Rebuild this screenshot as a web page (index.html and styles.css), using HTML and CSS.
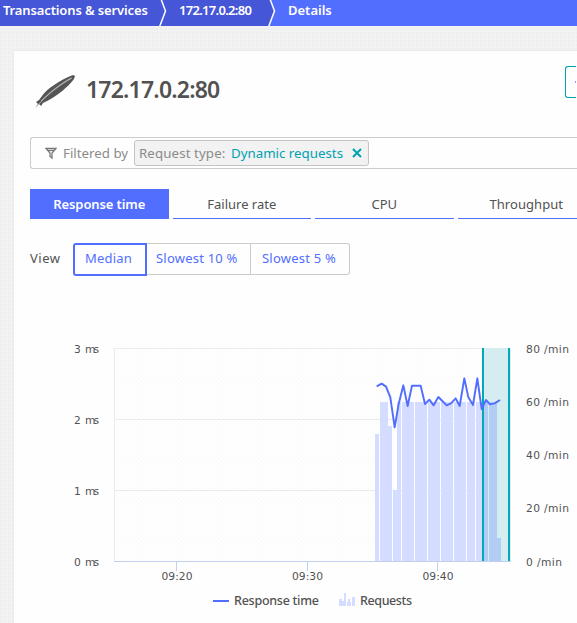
FILE: index.html
```html
<!DOCTYPE html>
<html lang="en">
<head>
<meta charset="utf-8">
<title>172.17.0.2:80</title>
<link rel="stylesheet" href="styles.css">
</head>
<body>
<nav class="crumbs">
  <a class="crumb crumb-first">Transactions &amp; services</a>
  <svg class="sep" viewBox="0 0 10 26"><path class="sep-fill" d="M0 0H3L8 11L2 26H0Z"/><path class="sep-line" d="M3 -1L7.500 11L1.500 27"/></svg>
  <a class="crumb crumb-second">172.17.0.2:80</a>
  <svg class="sep sep-last" viewBox="0 0 10 26"><path class="sep-fill" d="M0 0H3L8 11L2 26H0Z"/><path class="sep-line" d="M3 -1L7.500 11L1.500 27"/></svg>
  <a class="crumb crumb-third">Details</a>
</nav>
<main class="panel">
  <header class="head">
    <svg class="feather" viewBox="0 0 42 36">
      <path class="plume" d="M1 34L4 30L2 28L5 26L8 22C13 15 24 7 39 1L41 2L40 5C34 13 24 21 15 26L9 29L7 32L5 30Z"/>
      <path class="quill" d="M4 31C13 21 24 12 38 4M7 27C15 19 26 10 37 4"/>
    </svg>
    <h1>172.17.0.2:80</h1>
    <button class="more" aria-label="More"><svg class="dash" viewBox="0 0 1 2"><path d="M0 0H1V2H0Z"/></svg></button>
  </header>
  <section class="filter">
    <svg class="funnel" viewBox="0 0 12 12"><path d="M1 1.500H11L7 6V11L5 9.500V6Z"/><path d="M3 3.500H9"/></svg>
    <span class="by">Filtered by</span>
    <span class="chip"><span class="key">Request type:</span><span class="value">Dynamic requests</span><svg class="close" viewBox="0 0 10 10"><path d="M1 1L9 9M9 1L1 9"/></svg></span>
  </section>
  <div class="tabs">
    <a class="tab active">Response time</a>
    <a class="tab">Failure rate</a>
    <a class="tab">CPU</a>
    <a class="tab last">Throughput</a>
  </div>
  <div class="view">
    <span class="label">View</span>
    <a class="opt chosen">Median</a><a class="opt ten">Slowest 10 %</a><a class="opt five">Slowest 5 %</a>
  </div>
  <svg class="chart" viewBox="30 335 547 288">
    <defs>
      <pattern id="dots" width="5" height="5" patternUnits="userSpaceOnUse"><path d="M1 1h1v1H1zM3 3h1v1H3z" fill="#f8f8f8"/></pattern>
    </defs>
    <rect x="114" y="348" width="396" height="213" fill="url(#dots)"/>
    <path class="grid" d="M114.500 561V348M114 348.500H511M114 419.500H511M114 490.500H511M510.500 348V561"/>
    <path class="bars" d="M375 434h4v127h-4zM380 402h8v24h4v135h-12zM393 490h4v-88h4v159h-8zM402 402h12v159h-12zM415 402h12v159h-12zM428 402h12v159h-12zM441 402h12v159h-12zM454 402h12v159h-12zM467 402h8v159h-8zM476 402h6v159h-6z"/>
    <rect class="selection" x="483" y="348" width="26" height="213"/>
    <path class="bars-selected" d="M484 402h4v159h-4zM489 402h8v136h4v23h-12z"/>
    <path class="axis" d="M114 561.500H511M176.500 562V571M307.500 562V571M437.500 562V571"/>
    <path class="handles" d="M483 348V561M509 348V561"/>
    <polyline class="line" transform="translate(360 335) scale(.333333)" points="50,154 65,146 78,155 91,187 104,277 116,207 130,151 143,213 156,152 169,152 182,152 195,207 208,194 221,211 235,186 247,198 260,211 273,205 287,190 299,213 313,130 325,187 339,210 352,130 365,222 378,195 390,208 404,205 420,195"/>
    <g class="ticks">
      <text x="74" y="353">3</text><text x="85" y="353" textLength="14">ms</text>
      <text x="74" y="424">2</text><text x="85" y="424" textLength="14">ms</text>
      <text x="74" y="495">1</text><text x="85" y="495" textLength="14">ms</text>
      <text x="74" y="566">0</text><text x="85" y="566" textLength="14">ms</text>
      <text x="526" y="353" textLength="43">80 /min</text>
      <text x="526" y="406" textLength="43">60 /min</text>
      <text x="526" y="459" textLength="43">40 /min</text>
      <text x="526" y="512" textLength="43">20 /min</text>
      <text x="526" y="566" textLength="36">0 /min</text>
      <text x="161.500" y="580" textLength="31">09:20</text>
      <text x="292" y="580" textLength="31">09:30</text>
      <text x="422.500" y="580" textLength="31">09:40</text>
    </g>
    <path class="key-line" d="M213 601H229"/>
    <path class="key-bars" d="M339 599h3v7h-3zM344 593h2v13h-2zM342 601h2v5h-2zM347 602h4v4h-4zM348 599h2v3h-2zM352 597h3v9h-3z"/>
    <g class="legend">
      <text x="234" y="605" textLength="85">Response time</text>
      <text x="360" y="605" textLength="52">Requests</text>
    </g>
  </svg>
</main>
</body>
</html>
```

FILE: styles.css
```css
* { box-sizing: border-box; }
body {
  margin: 0;
  height: 623px;
  overflow: hidden;
  color: #525252;
  font: 13px/20px "Noto Sans", sans-serif;
  background: #f2f2f2 radial-gradient(circle at 1px 1px, #eeeeee 0.7px, transparent 0.8px) 0 0 / 4px 4px;
}
.crumbs {
  display: flex;
  height: 26px;
  background: #526eff;
  color: #fff;
  font-size: 13px;
  font-weight: 600;
  white-space: nowrap;
}
.crumb { height: 26px; line-height: 21px; }
.crumb-first { width: 158px; padding-left: 3px; background: #4556d7; letter-spacing: -0.13px; }
.crumb-second { width: 99px; padding-left: 11px; background: #4556d7; letter-spacing: -0.7px; }
.crumb-third { padding-left: 11px; }
.sep { width: 10px; height: 26px; background: #4556d7; }
.sep-last { background: #526eff; }
.sep-fill { fill: #4556d7; }
.sep-line { fill: none; stroke: #fff; stroke-width: 1.5; }
.panel {
  height: 600px;
  margin: 25px 0 0 14px;
  padding: 0 0 0 16px;
  background: #fefefe;
  box-shadow: 0 0 1px 1px #ebebeb;
}
.head { display: flex; height: 86px; padding-top: 15px; }
.feather { width: 42px; height: 36px; margin: 8px 0 0 4px; }
.plume { fill: #555; }
.quill { fill: none; stroke: #ccc; stroke-width: 0.7; }
h1 {
  width: 479px;
  margin: 8px 0 0 10px;
  font-size: 23px;
  line-height: 30px;
  font-weight: 600;
  letter-spacing: -0.8px;
}
.more {
  display: flex;
  align-items: center;
  justify-content: flex-end;
  width: 11px;
  height: 32px;
  padding: 0;
  border: 1px solid #00a1b2;
  border-right: 0;
  border-radius: 3px 0 0 3px;
  background: #fff;
}
.dash { width: 1px; height: 2px; fill: #8fa1ff; }
.filter {
  display: flex;
  align-items: center;
  height: 32px;
  padding-left: 14px;
  border: 1px solid #ccc;
  border-right: 0;
  border-radius: 3px 0 0 3px;
  color: #8b8b8b;
  font-size: 13.3px;
  line-height: 18px;
}
.funnel { width: 12px; height: 12px; fill: none; stroke: #777; stroke-width: 1.3; }
.by { width: 72px; margin-left: 6px; white-space: nowrap; }
.chip {
  display: flex;
  align-items: center;
  width: 235px;
  height: 26px;
  margin-left: -1px;
  padding-left: 4px;
  border: 1px solid #c4c4c4;
  border-radius: 3px;
  background: #f2f2f2;
  white-space: nowrap;
}
.key { width: 92px; letter-spacing: 0.1px; }
.value { width: 121px; color: #00a1b2; }
.close { width: 10px; height: 10px; fill: none; stroke: #00a1b2; stroke-width: 2; }
.tabs { display: flex; gap: 4px; margin-top: 20px; }
.tab {
  flex: none;
  width: 138.5px;
  height: 30px;
  line-height: 30px;
  border-bottom: 1px solid #526eff;
  text-align: center;
}
.active { background: #526eff; color: #fff; font-weight: 600; letter-spacing: -0.1px; }
.last { width: 119.5px; padding-left: 32px; text-align: left; letter-spacing: 0.05px; }
.view { display: flex; height: 33px; margin-top: 24px; line-height: 31px; }
.label { width: 43px; letter-spacing: 0.5px; }
.opt {
  border: 1px solid #ccc;
  border-left: 0;
  color: #526eff;
  white-space: nowrap;
  height: 32px;
  line-height: 29px;
  letter-spacing: 0.22px;
}
.chosen { width: 74px; height: 33px; padding-left: 10px; line-height: 27px; border: 2px solid #526eff; border-radius: 3px 0 0 3px; }
.ten { width: 104px; padding-left: 9px; }
.five { width: 99px; padding-left: 11px; border-radius: 0 3px 3px 0; }
.chart { display: block; width: 547px; height: 288px; margin-top: 59px; }
.grid { fill: none; stroke: #ebebeb; }
.bars { fill: #d4dcff; }
.selection { fill: #d5edf0; }
.bars-selected { fill: #b1cdf3; }
.axis { fill: none; stroke: #c0d0ee; }
.handles { fill: none; stroke: #00a9bb; stroke-width: 2; }
.line { fill: none; stroke: #526eff; stroke-width: 5.8; stroke-linejoin: round; }
.ticks { fill: #525252; font: 10.7px "DejaVu Sans", sans-serif; }
.key-line { stroke: #526eff; stroke-width: 2; }
.key-bars { fill: #d4dcff; }
.legend { fill: #525252; font: 500 12.5px "Noto Sans", sans-serif; }
```
